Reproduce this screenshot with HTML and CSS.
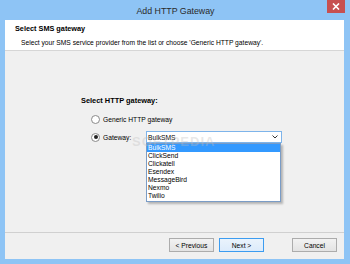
FILE: index.html
```html
<!DOCTYPE html>
<html>
<head>
<meta charset="utf-8">
<link rel="stylesheet" href="styles.css">
</head>
<body>
<div class="window">
  <div class="titlebar">
    <span class="title">Add HTTP Gateway</span>
    <div class="close">
      <svg width="8" height="7" viewBox="0 0 8 7"><path d="M1 0.5 L7 6.5 M7 0.5 L1 6.5" stroke="#fff" stroke-width="1.6"/></svg>
    </div>
  </div>
  <div class="client">
    <div class="header">
      <div class="h-title">Select SMS gateway</div>
      <div class="h-sub">Select your SMS service provider from the list or choose 'Generic HTTP gateway'.</div>
    </div>
    <div class="body">
      <div class="group">
        <div class="group-title">Select HTTP gateway:</div>
        <div class="radio-row"><span class="radio"></span><span>Generic HTTP gateway</span></div>
        <div class="radio-row gw-row">
          <span class="radio checked"></span><span class="gw-label">Gateway:</span>
          <div class="combo">
            <span class="combo-text">BulkSMS</span>
            <svg class="arrow" width="6" height="4" viewBox="0 0 6 4"><path d="M0.5 0.5 L3 3 L5.5 0.5" fill="none" stroke="#333" stroke-width="1"/></svg>
            <ul class="list">
              <li class="sel">BulkSMS</li>
              <li>ClickSend</li>
              <li>Clickatell</li>
              <li>Esendex</li>
              <li>MessageBird</li>
              <li>Nexmo</li>
              <li>Twilio</li>
            </ul>
          </div>
        </div>
      </div>
      <div class="watermark">SOFTPEDIA</div>
    </div>
    <div class="footer">
      <button class="btn">&lt; Previous</button>
      <button class="btn default">Next &gt;</button>
      <button class="btn cancel">Cancel</button>
    </div>
  </div>
</div>
</body>
</html>
```
FILE: styles.css
```css
* { box-sizing: border-box; }
html, body { margin: 0; padding: 0; }
body {
  width: 350px;
  height: 264px;
  font-family: "Liberation Sans", Arial, sans-serif;
  font-size: 6.7px;
  color: #000;
  overflow: hidden;
}
.window {
  width: 350px;
  height: 264px;
  background: #8ec4f5;
  padding: 0 6px 5px 5px;
  display: flex;
  flex-direction: column;
}
.titlebar {
  height: 20px;
  flex: none;
  position: relative;
  display: flex;
  align-items: center;
  justify-content: center;
}
.title {
  font-size: 8.8px;
  color: #2a2a2a;
  padding-left: 2px;
  margin-top: 1px;
}
.close {
  position: absolute;
  right: -1px;
  top: 0;
  width: 18px;
  height: 13px;
  background: #c75050;
  display: flex;
  align-items: center;
  justify-content: center;
}
.client {
  flex: 1;
  display: flex;
  flex-direction: column;
  background: #f0f0f0;
}
.header {
  height: 31px;
  background: #fff;
  border-bottom: 1px solid #d6d6d6;
  padding: 4px 0 0 10px;
}
.h-title {
  font-weight: bold;
  font-size: 7.3px;
  line-height: 10px;
}
.h-sub {
  line-height: 10px;
  margin-top: 4px;
  padding-left: 6px;
}
.body {
  flex: 1;
  position: relative;
  padding: 45px 0 0 76px;
}
.group-title {
  font-weight: bold;
  font-size: 7.4px;
  line-height: 10px;
}
.radio-row {
  display: flex;
  align-items: center;
  height: 12px;
  margin-top: 7px;
  padding-left: 10px;
}
.gw-row { margin-top: 6px; }
.radio {
  width: 9px;
  height: 9px;
  border: 1px solid #8a8a8a;
  border-radius: 50%;
  background: #fff;
  margin-right: 3px;
  display: flex;
  align-items: center;
  justify-content: center;
}
.radio.checked::after {
  content: "";
  width: 4px;
  height: 4px;
  border-radius: 50%;
  background: #222;
}
.gw-label {
  width: 43px;
}
.combo {
  position: relative;
  width: 136px;
  height: 12px;
  border: 1px solid #7eb4ea;
  background: #fff;
  display: flex;
  align-items: center;
  padding-left: 1px;
}
.combo-text { flex: 1; }
.arrow { margin-right: 3px; }
.list {
  position: absolute;
  left: -1px;
  top: 11px;
  width: 135px;
  margin: 0;
  padding: 0 0 1px 0;
  list-style: none;
  background: #fff;
  border: 1px solid #7a9cc6;
  box-shadow: 2px 2px 2px rgba(0,0,0,0.25);
  z-index: 2;
}
.list li {
  height: 8px;
  line-height: 8px;
  padding-left: 1px;
  white-space: nowrap;
}
.list li.sel {
  background: #3399ff;
  color: #fff;
}
.watermark {
  position: absolute;
  left: 127px;
  top: 83px;
  font-size: 13px;
  font-weight: bold;
  letter-spacing: 1px;
  color: rgba(190,190,190,0.35);
  z-index: 3;
  pointer-events: none;
}
.footer {
  height: 27px;
  flex: none;
  border-top: 1px solid #d0d0d0;
  display: flex;
  align-items: flex-start;
  padding: 5px 7px 0 0;
  justify-content: flex-end;
}
.btn {
  width: 45px;
  height: 14px;
  padding: 0;
  font-family: "Liberation Sans", Arial, sans-serif;
  font-size: 6.7px;
  color: #000;
  background: linear-gradient(#f2f2f2, #e3e3e3);
  border: 1px solid #acacac;
  margin-left: 5px;
}
.btn.default {
  border-color: #3c9cf0;
  background: linear-gradient(#eaf3fc, #dcebfb);
}
.btn.cancel { margin-left: 28px; }
```
